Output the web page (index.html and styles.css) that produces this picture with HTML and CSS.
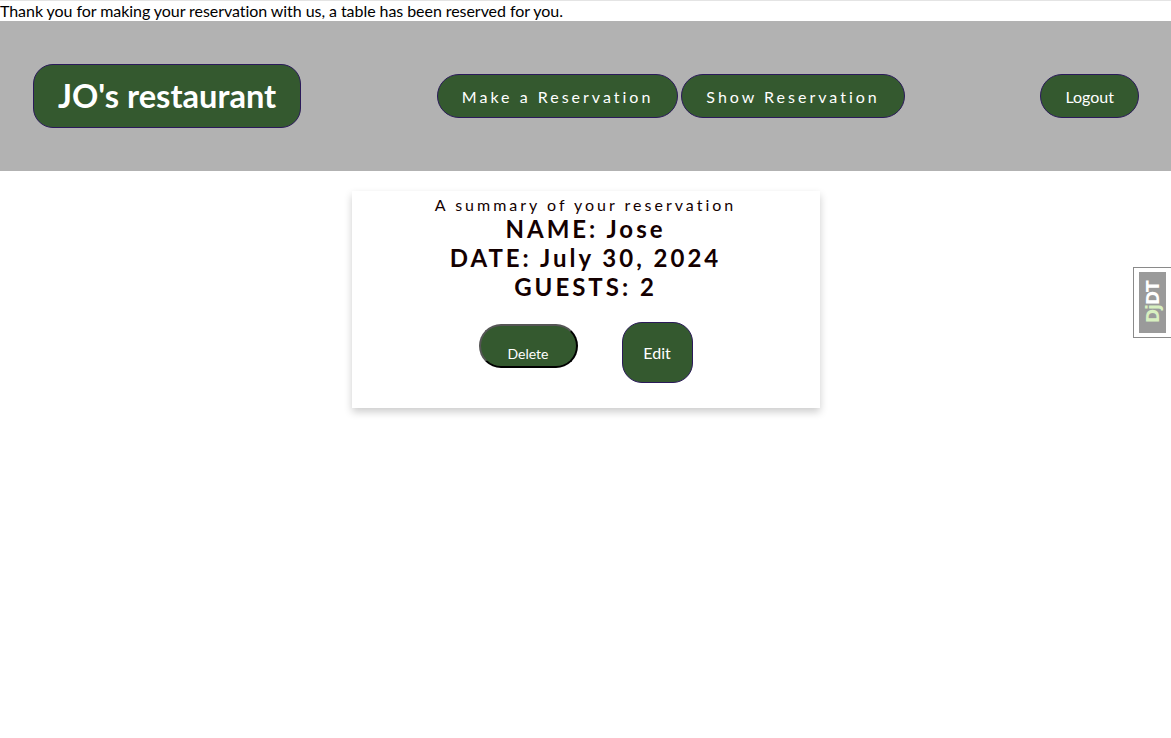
FILE: index.html
```html
<!DOCTYPE html>
<html lang="en">
<head>
<meta charset="utf-8">
<title>JO's restaurant</title>
<link rel="stylesheet" href="styles.css">
</head>
<body>
<p class="msg">Thank you for making your reservation with us, a table has been reserved for you.</p>
<header class="topbar">
  <a class="brand" href="#">JO's restaurant</a>
  <nav class="nav">
    <a class="pill spaced" href="#">Make a Reservation</a>
    <a class="pill spaced" href="#">Show Reservation</a>
  </nav>
  <a class="pill logout" href="#">Logout</a>
</header>
<main class="content">
  <section class="card">
    <p class="summary">A summary of your reservation</p>
    <h2 class="line">NAME: Jose</h2>
    <h2 class="line">DATE: July 30, 2024</h2>
    <h2 class="line">GUESTS: 2</h2>
    <div class="actions">
      <button class="btn-delete" type="button">Delete</button>
      <a class="btn-edit" href="#">Edit</a>
    </div>
  </section>
</main>
<div class="djdt"><span class="djdt-inner"><span class="dj">Dj</span>DT</span></div>
</body>
</html>
```
FILE: styles.css
```css
html, body {
  margin: 0;
  padding: 0;
  background: #fff;
}
body {
  font-family: Lato, "Open Sans", sans-serif;
  color: #000;
  border-top: 1px solid #e4e4e4;
  min-height: 737px;
}
.msg {
  margin: 0;
  font-size: 16px;
  line-height: 20px;
  height: 20px;
  letter-spacing: -0.06px;
}
.topbar {
  background: #b2b2b2;
  height: 150px;
  display: flex;
  align-items: center;
  justify-content: space-between;
  padding: 0 32px 0 33px;
  box-sizing: border-box;
}
.brand {
  display: block;
  background: #34592f;
  color: #fff;
  text-decoration: none;
  font-weight: 700;
  font-size: 32.6px;
  line-height: 38px;
  padding: 12px 24px;
  border: 1px solid #2b1a5a;
  border-radius: 20px;
}
.nav {
  display: flex;
  gap: 3px;
}
.pill {
  display: block;
  background: #34592f;
  color: #fff;
  text-decoration: none;
  font-size: 16px;
  line-height: 20px;
  padding: 12px 24px 10px;
  border: 1px solid #2b1a5a;
  border-radius: 22px;
}
.spaced {
  letter-spacing: 3px;
}
.content {
  display: flex;
  justify-content: center;
  padding-top: 20px;
}
.card {
  width: 468px;
  box-sizing: border-box;
  background: #fff;
  box-shadow: 0 4px 8px rgba(0, 0, 0, 0.2);
  text-align: center;
  padding: 5px 0 25px;
  color: #140000;
}
.summary {
  margin: 0;
  font-size: 16px;
  line-height: 18px;
  letter-spacing: 3px;
}
.line {
  margin: 0;
  font-size: 24px;
  line-height: 29px;
  font-weight: 700;
  letter-spacing: 3px;
}
.actions {
  display: flex;
  justify-content: center;
  align-items: flex-start;
  gap: 44px;
  margin-top: 21px;
}
.btn-delete {
  margin-top: 2px;
  width: 99px;
  height: 44px;
  background: #34592f;
  color: #fff;
  font-family: Lato, "Open Sans", sans-serif;
  font-size: 14px;
  padding: 14px 0 0;
  border: 2px outset #444;
  border-color: #555 #000 #000 #555;
  border-radius: 22px;
  box-sizing: border-box;
}
.btn-edit {
  display: flex;
  align-items: center;
  justify-content: center;
  width: 71px;
  height: 61px;
  box-sizing: border-box;
  background: #34592f;
  color: #fff;
  text-decoration: none;
  font-size: 16px;
  border: 1px solid #2b1a5a;
  border-radius: 20px;
}
.djdt {
  position: fixed;
  right: 0;
  top: 267px;
  width: 38px;
  height: 71px;
  box-sizing: border-box;
  background: #fff;
  border: 1px solid #8a8a8a;
  border-right: none;
  padding: 4px 0 4px 5px;
}
.djdt-inner {
  display: flex;
  align-items: center;
  justify-content: center;
  width: 27px;
  height: 61px;
  background: #9a9a9a;
  color: #fff;
  font-family: "DejaVu Sans", sans-serif;
  font-weight: 700;
  font-size: 17px;
  writing-mode: vertical-rl;
  transform: rotate(180deg);
  letter-spacing: -1px;
}
.dj {
  color: #d8f0c0;
}
```
